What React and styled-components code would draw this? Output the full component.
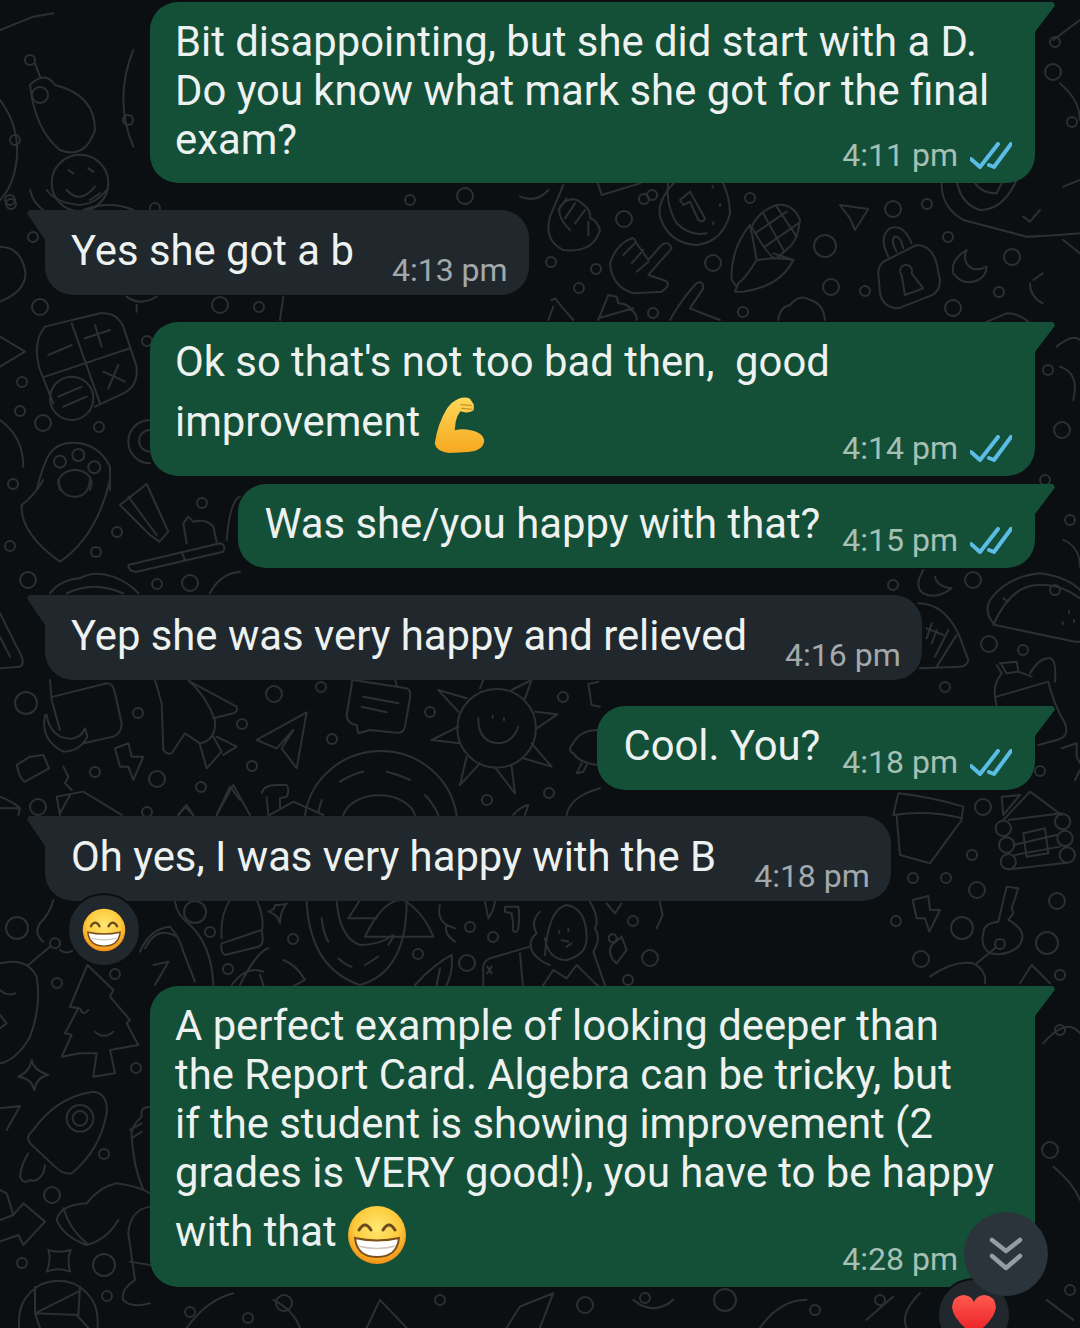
import React from 'react'
import styled, { createGlobalStyle } from 'styled-components'

const GlobalStyle = createGlobalStyle`
  html, body { margin: 0; padding: 0; background: #0b0f12; }
  * { box-sizing: border-box; }
`

// wallpaper rings, [x, y, r] in page pixels
const rings = [
  [11,204,5],[33,237,5],[40,307,8],[220,305,8],[259,307,5],[147,341,5],[22,382,5],[20,411,5],[43,423,8],[99,427,5],
  [13,484,5],[10,546,5],[96,552,5],[117,532,5],[202,503,5],[28,580,8],[157,584,5],[190,583,8],[26,703,11],[138,713,5],
  [95,772,5],[157,779,8],[201,787,5],[38,807,8],[147,812,5],[17,928,11],[57,983,5],[115,974,5],[136,1068,5],[104,1154,5],
  [52,1195,8],[22,1263,5],[104,1265,11],[107,1296,5],[274,694,8],[321,687,5],[242,724,5],[332,739,5],[430,712,5],[563,697,5],
  [252,766,5],[487,800,5],[549,793,5],[644,199,5],[750,198,5],[624,219,8],[551,262,5],[596,269,5],[579,288,5],[713,263,8],
  [825,246,11],[893,209,8],[927,204,5],[948,237,5],[1012,257,8],[999,292,5],[831,287,8],[865,291,5],[953,308,8],[653,313,5],
  [743,312,5],[893,585,5],[973,580,8],[989,644,8],[1023,650,5],[945,687,5],[1040,771,5],[983,807,8],[972,855,5],[913,878,5],
  [946,878,5],[977,890,8],[1057,901,8],[896,921,5],[962,928,11],[1047,943,11],[921,959,8],[1060,975,5],[195,912,11],[210,932,5],
  [293,939,5],[228,969,5],[418,954,5],[470,927,5],[493,937,5],[467,963,8],[633,921,5],[650,958,8],[628,980,5],[1055,42,5],
  [1053,72,8],[1072,122,5],[30,60,5],[128,120,5],[15,140,5],[40,95,8],[10,200,5],[1048,370,5],[1062,430,8],[1045,480,5],
  [1070,520,5],[1055,590,5],[284,1303,8],[248,1318,5],[440,1300,5],[585,1305,8],[645,1298,5],[725,1300,11],[815,1310,5],[880,1300,5],
  [190,1312,5],[1060,1030,5],[1050,1150,8],[1070,1290,5],[155,208,5],[410,200,5],[465,196,8],[652,195,5],
]

// traced doodles, each group is in the 3x coordinates of its own crop
const doodles = [
  { x: 0, y: 190, paths: [
    'M135 410 L300 370 Q350 365 370 410 L410 530 Q415 590 370 610 L285 650 M120 540 Q95 460 135 410 M120 540 L160 640',
    'M215 400 L300 640 M135 560 L390 475 M145 495 L215 465 M255 445 L330 420 M285 405 L305 470 M310 545 L375 575 M355 525 L325 595 M175 620 L245 590 M190 650 L260 620',
    'M150 625 A65 65 0 1 0 280 625 A65 65 0 1 0 150 625',
    'M110 900 Q130 820 150 790 Q180 750 240 760 Q300 770 330 830 L330 900',
    'M162 815 A18 18 0 1 0 198 815 A18 18 0 1 0 162 815 M217 795 A18 18 0 1 0 253 795 A18 18 0 1 0 217 795 M265 832 A18 18 0 1 0 301 832 A18 18 0 1 0 265 832',
    'M175 880 A50 40 0 1 1 275 880 L270 900 M180 900 L175 880',
    'M0 170 Q60 170 75 240 Q85 300 0 335 M0 440 L75 485 L0 530 M0 690 Q70 740 70 830',
    'M450 690 A65 65 0 0 0 450 820 M450 720 A32 32 0 0 0 450 785',
    'M90 0 Q100 40 130 60 M140 0 Q170 40 240 45 Q290 40 320 0 M270 30 L300 10',
    'M380 320 Q420 350 470 320 M410 345 L410 365 M850 320 L840 390',
  ] },
  { x: 0, y: 480, paths: [
    'M130 0 Q100 50 65 75 Q60 160 180 245 Q290 170 330 0 M175 0 Q180 50 225 50 Q265 50 270 0',
    'M360 75 L440 12 L505 155 L478 185 L450 165 Z M385 50 L470 165',
    'M385 255 L660 190 Q680 195 670 215 L410 275 Q385 275 385 255 M545 215 L555 240',
    'M560 190 L550 130 L565 110 L580 125 Q620 115 640 140 L650 185',
    'M150 340 Q180 300 240 295 Q280 270 340 290 Q390 310 415 340 M200 340 Q280 300 370 340',
    'M0 400 L50 500 Q80 550 60 560 L0 565 M0 470 L30 530',
    'M150 600 L155 660 L180 750 M160 650 L320 610 Q340 610 345 640 L365 730 Q365 760 340 770 L250 790',
    'M135 705 Q120 780 190 815 Q240 815 262 770 L255 745 Q235 790 180 770 Q145 750 140 705 Z',
    'M465 600 L485 670 L490 810 Q500 825 515 820 L555 760 L600 790 Q650 780 645 720 Q620 650 565 600',
    'M570 605 L710 680 Q715 695 700 700 L640 715 M600 795 L620 865 L665 815 L640 770 M650 770 L710 800 L670 825',
    'M50 855 L90 830 L130 825 L147 865 L75 905 Q60 900 50 855',
    'M345 805 L385 790 L395 830 L430 830 L400 900 L385 860 L360 860 Z M190 860 L205 890 L195 910 L215 930',
    'M170 950 L250 935 L365 1005 M170 950 L180 1005 M210 945 L180 1000 M535 1005 L555 980 L580 1005 M650 1005 L690 920 L720 960',
    'M0 950 Q40 965 60 985 L55 1005 M0 985 L55 985',
    'M680 180 Q690 60 720 50 M630 340 Q660 280 720 275',
  ] },
  { x: 0, y: 900, paths: [
    'M262 195 L210 320 L235 325 L195 400 L215 405 L185 470 L240 460 L290 460 L280 530 L345 520 L330 450 L415 435 L380 370 L390 360 L330 290 L340 270 Z',
    'M240 325 Q250 350 265 330 M285 395 Q310 420 340 395',
    'M0 190 Q80 170 110 230 Q125 320 90 410 Q50 480 0 490 M0 270 Q20 290 45 280 M0 345 L20 370 L0 385',
    'M85 195 L150 140 M150 130 A15 15 0 1 0 180 130 A15 15 0 1 0 150 130 M160 0 Q150 40 120 70 Q100 100 130 125 M180 150 Q200 165 220 150',
    'M95 480 Q100 510 145 525 Q110 530 103 570 Q95 535 55 530 Q90 515 95 480Z M0 625 L60 618 L20 690',
    'M100 690 Q170 590 280 575 Q325 580 320 640 Q300 750 215 820 Q190 825 165 800 L90 730 Q75 710 100 690Z',
    'M200 655 A40 40 0 1 0 280 655 A40 40 0 1 0 200 655 M218 655 A22 22 0 1 0 262 655 A22 22 0 1 0 218 655',
    'M85 760 Q65 790 60 830 Q70 855 90 840 Q110 850 130 820 L135 795',
    'M0 960 L40 945 L70 910 L135 965 L70 1035 L55 1005 L0 1025 M0 870 L20 880 L40 945',
    'M170 960 Q180 915 260 910 Q300 860 350 850 Q420 860 450 880 M170 960 Q190 1010 260 1035 Q320 1020 355 960 M190 925 Q210 990 260 1030',
    'M145 1050 Q175 1060 212 1050 Q200 1080 210 1115 Q175 1100 140 1115 Q155 1080 145 1050Z',
    'M57 1260 A118 118 0 0 1 293 1260 L293 1284 M57 1260 L57 1284',
    'M105 1240 L235 1175 M105 1240 L120 1284 M235 1245 L105 1240 M230 1245 L265 1284 M105 1240 L105 1160 M235 1245 L240 1160',
    'M450 620 Q420 620 425 650 Q390 680 395 710 Q400 800 430 870 M390 690 L425 670 M395 715 L425 695',
    'M450 920 Q390 930 385 1000 L405 1140 Q360 1170 370 1200 Q390 1225 450 1210 M390 1085 L450 1095',
  ] },
  { x: 150, y: 680, paths: [
    'M320 180 L470 97 L440 265 L395 205 L430 150 L380 205 Z',
    'M610 0 L770 25 Q785 30 780 55 L765 140 Q760 160 740 158 L660 150 L625 160 L620 135 Q590 130 590 105 L605 15 Q605 0 610 0Z',
    'M640 50 L745 70 M635 80 L710 97 M735 0 L740 15',
    'M922 145 A118 118 0 1 0 1158 145 A118 118 0 1 0 922 145',
    'M985 115 Q985 190 1050 190 Q1090 185 1105 140 M1028 107 L1028 113 M1062 115 L1062 121',
    'M925 95 L865 30 L950 55 M990 25 L1000 0 M1085 30 L1145 0 L1125 55 M1155 95 L1222 103 L1160 145 M1145 190 L1205 260 L1120 235 M1085 260 L1095 340 L1035 262 M990 250 L930 315 L950 230 M925 140 L845 180 L930 190',
    'M1345 150 Q1290 150 1270 190 Q1250 210 1270 220 Q1290 250 1345 255 M1295 250 L1280 280 L1300 275 L1310 255',
    'M465 405 A230 225 0 0 1 920 405 M570 305 Q610 280 640 275 M710 275 Q750 285 780 300 M580 405 A110 75 0 0 1 795 405',
    'M515 360 L505 395 M825 345 Q850 370 865 405',
    'M335 340 Q340 315 380 315 L410 315 Q420 330 410 350 L390 355 L390 380 M350 352 L355 405 M360 405 L430 365 L520 405',
    'M200 405 L250 315 L300 405 M85 405 L110 375 L130 405 M1345 5 L1315 12 L1325 75 L1350 80 M1250 405 Q1260 350 1350 325 M1090 405 Q1110 380 1135 375 L1125 405',
  ] },
  { x: 520, y: 180, paths: [
    'M130 15 L90 110 Q70 180 130 210 Q220 220 240 150 Q230 120 210 115 Q215 85 170 60 Q145 50 120 80 Q110 110 150 150 M140 55 L115 90 M165 70 L135 115 M195 90 L165 130 M205 125 L205 165',
    'M0 50 Q50 70 85 30 M230 0 L245 45 L360 10',
    'M470 0 Q410 60 420 110 Q445 190 530 195 Q610 185 630 100 Q630 50 605 0 M445 0 Q435 70 470 130 Q510 170 560 160',
    'M480 60 L510 35 L555 115 Q550 130 535 120 L510 65 L490 75 Z',
    'M600 72 L600 78 M580 127 L580 133 M578 17 L578 23',
    'M695 140 Q720 90 770 75 Q820 70 840 120 Q835 170 815 195 L770 235 Q750 240 695 140',
    'M730 100 L790 210 M770 80 L830 170 M705 160 L800 95 M735 200 L835 130',
    'M690 135 Q630 210 635 300 L650 320 M690 135 Q700 180 710 240 Q680 290 655 310 L645 335 L670 335 Q780 320 820 240 Q770 230 715 240 M820 240 L760 220',
    'M335 175 Q290 190 270 250 Q275 320 340 340 L425 335 Q460 310 430 300 L385 285 L455 205 Q445 180 425 195 L385 240 L350 190 Q340 170 335 175 M310 225 L345 190 M335 250 L370 210 M350 275 L385 245',
    'M960 75 L1045 87 L1005 150 L990 115 Z',
    'M1100 240 L1190 195 Q1235 195 1250 250 L1260 300 Q1260 340 1225 350 L1135 385 Q1090 385 1080 340 L1075 280 Q1075 250 1100 240Z',
    'M1105 230 Q1075 170 1110 145 Q1150 130 1175 190 M1130 215 Q1110 180 1125 170 Q1140 165 1150 205',
    'M1145 285 A18 18 0 1 1 1175 280 L1210 325 L1155 345 Z',
    'M1340 210 Q1290 240 1300 280 Q1330 320 1375 300 Q1400 285 1400 260 Q1360 280 1340 250 Q1330 230 1340 210Z',
    'M1265 0 Q1260 80 1330 120 L1520 170 Q1560 170 1680 160 M1310 0 Q1320 70 1380 90 Q1450 90 1490 0 M1360 0 Q1380 40 1430 40 L1450 0 M1510 110 L1530 125 L1560 90',
    'M450 420 Q490 350 530 310 Q550 300 550 325 L510 385 L560 405 L600 420',
    'M95 360 L105 355 L125 380 L160 420 M100 380 L85 420 M235 420 L265 345 L290 350 L295 370 Q330 370 350 410 L350 420 M235 415 L340 385',
    'M775 420 Q780 380 810 375 Q840 340 870 360 Q910 370 915 420 M1390 430 L1460 400 Q1500 400 1530 430 M1530 310 Q1530 350 1568 370 M1568 280 L1540 300',
  ] },
  { x: 880, y: 570, paths: [
    'M130 0 Q100 50 130 70 Q170 90 215 55 Q170 50 165 20',
    'M115 100 Q190 100 235 190 L265 270 Q260 290 240 290 L120 295 M140 175 L190 195 M155 160 L140 205 M170 180 L155 220 M230 195 L170 290 M205 180 L165 260',
    'M345 165 Q310 130 330 90 Q380 20 480 10 Q560 20 600 60 M345 165 L585 215 L600 215 M340 165 Q390 50 470 45 Q540 40 600 85 M370 85 Q385 100 390 85',
    'M567 122 L567 128 M548 157 L548 163 M582 150 L582 156',
    'M360 280 L410 275 L415 305 L455 320 M350 285 L365 310 Q340 340 345 380 L350 410 M350 380 L505 335 M365 285 L380 310 L415 305',
    'M450 310 Q480 260 510 265 Q530 270 525 335 M505 335 Q520 400 555 460 Q570 500 530 510 L475 525',
    'M545 535 L590 520 L590 560 L600 580 M600 600 L585 630',
    'M55 670 Q150 680 250 710 L245 745 Q150 720 40 735 Z M50 740 L60 855 L150 880 L245 750',
    'M347 775 A23 23 0 1 0 393 775 A23 23 0 1 0 347 775 M357 825 A23 23 0 1 0 403 825 A23 23 0 1 0 357 825 M362 875 A23 23 0 1 0 408 875 A23 23 0 1 0 362 875',
    'M525 755 A23 23 0 1 0 571 755 A23 23 0 1 0 525 755 M532 805 A23 23 0 1 0 578 805 A23 23 0 1 0 532 805 M539 855 A23 23 0 1 0 585 855 A23 23 0 1 0 539 855',
    'M370 750 L450 665 L545 735 M385 750 L545 730 M400 825 L530 795 M405 855 L540 830 M385 898 L560 878',
    'M430 790 L495 775 L505 850 L440 860 Z M365 680 L420 675 L370 735Z',
    'M98 990 L145 978 L150 1020 L180 1020 L148 1085 L135 1045 L110 1045 Z',
    'M310 1090 Q310 1060 355 1055 L380 950 L415 955 L395 1015 L400 1030 L385 1050 Q450 1085 415 1130 Q380 1160 330 1150 Q300 1130 310 1090Z',
    'M345 1122 A15 15 0 1 0 375 1122 A15 15 0 1 0 345 1122 M345 1135 L290 1180',
    'M150 1220 Q220 1170 280 1180 Q320 1200 315 1240 M420 1240 L455 1185 L510 1240',
  ] },
  { x: 140, y: 895, paths: [
    'M270 15 Q240 60 245 130 M350 15 Q375 70 365 110 M245 145 L365 105 Q375 150 355 155 L255 180 Q240 170 245 145',
    'M105 20 Q110 60 150 90 Q215 150 220 270',
    'M0 170 Q30 100 90 95 Q120 130 130 170 L165 260 M15 160 Q50 90 110 125 M40 210 L85 200 L45 270',
    'M405 30 Q430 30 440 25 Q420 50 420 85 Q415 60 385 50 Q405 45 405 30Z',
    'M500 20 Q510 220 660 270 Q800 230 800 20',
    'M675 125 Q730 10 790 15 Q850 50 880 125 Z M625 70 L710 70 M625 70 L660 15',
    'M545 70 Q550 115 565 140 M590 20 Q600 130 660 150 Q720 150 760 120 M595 190 Q615 210 635 215 M675 210 L715 185 M745 150 L760 125',
    'M900 30 Q890 70 920 90 Q910 115 945 140 M920 90 L945 100 M1035 20 L1045 70 Q1060 50 1065 20',
    'M1095 35 L1135 35 Q1140 60 1135 100 L1130 110 Q1115 115 1120 90 L1115 55 L1095 50Z',
    'M1215 180 Q1225 40 1280 30 Q1340 40 1340 130 Q1340 180 1280 195 Q1225 195 1215 130',
    'M1200 50 Q1170 80 1190 115 Q1160 140 1180 175 Q1200 200 1230 210 M1350 20 Q1380 70 1365 100 Q1385 130 1360 170 L1400 285',
    'M1258 107 L1258 113 M1285 102 L1285 108 M1265 135 L1285 140 M1280 155 L1295 145',
    'M1200 285 L1240 225 L1280 250 L1310 210 L1360 260 L1390 285',
    'M1170 155 L1050 190 Q1025 200 1030 230 L1030 285 M1140 175 L1150 285 M1042 215 L1055 235 M1055 215 L1042 235',
    'M1415 150 L1445 125 L1460 165 L1430 205 Q1400 180 1415 150Z M1406 130 A12 12 0 1 0 1430 130 A12 12 0 1 0 1406 130',
    'M1520 10 L1555 0 L1568 60 L1550 100 M1400 25 L1425 55 L1445 25',
    'M825 270 Q880 210 935 180 Q940 230 920 270 M900 220 L890 270 M275 270 Q320 210 370 230 M360 240 L375 285 M430 195 Q470 210 495 255 L440 285 M300 270 Q350 170 385 160',
  ] },
  // top left and the edges, by eye from the full picture
  { x: 0, y: 0, paths: [
    'M90 255 Q135 210 165 255 Q285 285 285 390 Q255 480 180 450 Q105 390 90 255Z M120 230 L105 190',
    'M155 549 A85 85 0 1 0 325 549 A85 85 0 1 0 155 549 M200 570 Q240 615 285 560 M205 510 L220 520 M265 505 L280 515',
    'M0 300 Q60 380 50 480 Q40 560 0 600 M0 90 L100 50 L160 40 M400 150 Q340 300 400 440 M250 630 Q330 600 400 630',
    'M3160 120 L3240 60 M3180 250 Q3240 300 3240 360 M3170 1040 Q3220 1000 3240 1020',
    'M3180 1100 Q3240 1120 3220 1200 M3190 560 L3240 540 M3190 720 L3240 760 M3190 1620 Q3240 1640 3240 1700',
    'M3130 3130 Q3200 3050 3240 3100 M3160 3500 Q3220 3550 3240 3600 M3140 3900 L3220 3960',
    'M1520 3984 L1560 3920 L1660 3880 L1620 3984 M1900 3900 Q1960 3950 2020 3900 M2280 3984 Q2340 3900 2420 3900 M2600 3960 L2680 3890 M2760 3880 Q2700 3940 2720 3984',
    'M560 3984 Q620 3900 700 3880 M820 3900 Q880 3930 900 3984 M1100 3984 L1140 3900 L1220 3984',
  ] },
]

const Doodles = () => (
  <Wallpaper viewBox="0 0 1080 1328" aria-hidden="true">
    {rings.map(([cx, cy, r], i) => <circle key={i} cx={cx} cy={cy} r={r} />)}
    {doodles.map((group, i) => (
      <g key={i} transform={`translate(${group.x} ${group.y}) scale(0.3333)`} strokeWidth="6">
        {group.paths.map((d, j) => <path key={j} d={d} />)}
      </g>
    ))}
  </Wallpaper>
)

const Ticks = () => (
  <TickIcon viewBox="0 0 42 27" aria-hidden="true">
    <path d="M1 17 L10 25 L28 2" />
    <path d="M19 23 L24 25 L41 2" />
  </TickIcon>
)

const Grin = ({ id, size }) => (
  <EmojiIcon $size={size} viewBox="0 0 60 60" aria-hidden="true">
    <defs>
      <radialGradient id={id} cx="50%" cy="38%" r="62%">
        <stop offset="0%" stopColor="#ffe873" />
        <stop offset="62%" stopColor="#fdcb3c" />
        <stop offset="100%" stopColor="#f08f16" />
      </radialGradient>
    </defs>
    <circle cx="30" cy="30" r="29" fill={`url(#${id})`} />
    <path d="M12 25 Q18 15 24 25 M36 25 Q42 15 48 25" fill="none" stroke="#6d4a1e" strokeWidth="3" strokeLinecap="round" />
    <path d="M8 33 Q30 38 52 33 Q50 52 30 52 Q10 52 8 33Z" fill="#fff" stroke="#7a4f1c" strokeWidth="2" />
    <path d="M11 41 Q30 46 49 41" fill="none" stroke="#cfc8bd" strokeWidth="1.5" />
  </EmojiIcon>
)

const Muscle = () => (
  <EmojiIcon $size={57} viewBox="14 11 54 60" aria-hidden="true">
    <defs>
      <linearGradient id="muscleFill" x1="0" y1="0" x2="0" y2="1">
        <stop offset="0%" stopColor="#ffd858" />
        <stop offset="100%" stopColor="#f5a81f" />
      </linearGradient>
    </defs>
    <path d="M15 61 Q18 40 28 24 Q33 17 40 14 Q47 11 52 14 L56 20 L56 26 Q52 29 46 28 L42 27 Q38 32 37 38 L36 47 Q44 45 53 47 Q67 50 67 59 Q65 69 50 70 L30 71 Q16 69 15 61Z" fill="url(#muscleFill)" />
    <path d="M42 20 L54 21 M43 24 L55 25" fill="none" stroke="#c07f1e" strokeWidth="1" />
  </EmojiIcon>
)

const Heart = () => (
  <EmojiIcon $size={46} viewBox="0 0 46 42" aria-hidden="true">
    <defs>
      <linearGradient id="heartFill" x1="0" y1="0" x2="0" y2="1">
        <stop offset="0%" stopColor="#ff5a4f" />
        <stop offset="100%" stopColor="#e81c24" />
      </linearGradient>
    </defs>
    <path d="M23 41 Q2 26 1 13 Q2 2 12 1 Q20 1 23 8 Q26 1 34 1 Q44 2 45 13 Q44 26 23 41Z" fill="url(#heartFill)" />
  </EmojiIcon>
)

const Meta = ({ time, ticks, mine }) => (
  <MetaRow $mine={mine}>
    <span>{time}</span>
    {ticks && <Ticks />}
  </MetaRow>
)

export default function App() {
  return (
    <Screen>
      <GlobalStyle />
      <Doodles />
      <MessageList>
        <Bubble $mine $wide $top={2} $padTop={15}>
          <Body $gap={10}>
            <Line>Bit disappointing, but she did start with a D.</Line>
            <Line>Do you know what mark she got for the final</Line>
            <Line>exam?</Line>
          </Body>
          <Meta time="4:11 pm" ticks mine />
        </Bubble>

        <Bubble $top={27}>
          <Body><Line>Yes she got a b</Line></Body>
          <Meta time="4:13 pm" />
        </Bubble>

        <Bubble $mine $wide $top={27} $padTop={10}>
          <Body $gap={15}>
            <Line $height={60}>Ok so that's not too bad then,  good</Line>
            <Line $height={60}>improvement <Muscle /></Line>
          </Body>
          <Meta time="4:14 pm" ticks mine />
        </Bubble>

        <Bubble $mine $top={8}>
          <Body><Line>Was she/you happy with that?</Line></Body>
          <Meta time="4:15 pm" ticks mine />
        </Bubble>

        <Bubble $top={27}>
          <Body><Line>Yep she was very happy and relieved</Line></Body>
          <Meta time="4:16 pm" />
        </Bubble>

        <Bubble $mine $top={26}>
          <Body><Line>Cool. You?</Line></Body>
          <Meta time="4:18 pm" ticks mine />
        </Bubble>

        <Bubble $top={26}>
          <Body><Line>Oh yes, I was very happy with the B</Line></Body>
          <Meta time="4:18 pm" />
          <Reaction $left={22} $lift={8}><Grin id="grinSmall" size={44} /></Reaction>
        </Bubble>

        <Bubble $mine $wide $top={85} $padTop={15}>
          <Body $gap={11}>
            <Line>A perfect example of looking deeper than</Line>
            <Line>the Report Card. Algebra can be tricky, but</Line>
            <Line>if the student is showing improvement (2</Line>
            <Line>grades is VERY good!), you have to be happy</Line>
            <Line $height={70}>with that <Grin id="grinLarge" size={60} /></Line>
          </Body>
          <Meta time="4:28 pm" ticks mine />
          <Reaction $left={787} $lift={9}><Heart /></Reaction>
        </Bubble>
      </MessageList>
      <ScrollButton aria-label="Scroll to bottom">
        <svg width="34" height="36" viewBox="0 0 34 36" fill="none" stroke="#939da5" strokeWidth="4.5" strokeLinecap="round" strokeLinejoin="round">
          <path d="M3 4 L17 15 L31 4" />
          <path d="M3 20 L17 32 L31 20" />
        </svg>
      </ScrollButton>
    </Screen>
  )
}

const Screen = styled.div`
  position: relative;
  width: 1080px;
  height: 1328px;
  overflow: hidden;
  background: #0b0f12;
  font-family: Roboto, "Liberation Sans", sans-serif;
`

const Wallpaper = styled.svg`
  position: absolute;
  inset: 0;
  width: 1080px;
  height: 1328px;
  fill: none;
  stroke: #2c3033;
  stroke-width: 2;
  stroke-linecap: round;
  stroke-linejoin: round;
`

const MessageList = styled.div`
  position: relative;
  display: flex;
  flex-direction: column;
  align-items: flex-start;
  padding: 0 45px;
`

const Bubble = styled.div`
  position: relative;
  margin-top: ${props => props.$top}px;
  align-self: ${props => props.$mine ? 'flex-end' : 'flex-start'};
  background: ${props => props.$mine ? '#144f38' : '#20282d'};
  color: #edf2f0;
  border-radius: ${props => props.$mine ? '28px 0 28px 28px' : '0 28px 28px 28px'};
  ${props => props.$wide ? `
    display: grid;
    width: 885px;
    padding: ${props.$padTop}px 23px 9px 25px;
  ` : `
    display: flex;
    gap: ${props.$mine ? 22 : 38}px;
    height: ${props.$mine ? 84 : 85}px;
    padding: ${props.$mine ? '4px 23px 9px 26px' : '2px 21px 6px 26px'};
  `}

  &::before {
    content: '';
    position: absolute;
    top: 0;
    ${props => props.$mine ? 'right: -20px;' : 'left: -18px;'}
    width: ${props => props.$mine ? 20 : 18}px;
    height: 30px;
    background: inherit;
    clip-path: ${props => props.$mine
      ? 'polygon(0 0, 90% 0, 100% 12%, 0 100%)'
      : 'polygon(10% 0, 100% 0, 100% 100%, 0 12%)'};
  }
`

const Body = styled.div`
  grid-area: 1 / 1;
  align-self: center;
  padding-bottom: ${props => props.$gap || 0}px;
`

const Line = styled.div`
  font-size: 41.8px;
  line-height: ${props => props.$height || 49}px;
  white-space: pre;
`

const MetaRow = styled.div`
  grid-area: 1 / 1;
  align-self: end;
  justify-self: end;
  display: flex;
  align-items: center;
  gap: 12px;
  height: 38px;
  font-size: 32px;
  color: ${props => props.$mine ? '#a5c0b4' : '#a3a8ab'};
`

const TickIcon = styled.svg`
  width: 42px;
  height: 27px;
  fill: none;
  stroke: #5bbde6;
  stroke-width: 4;
  stroke-linecap: round;
  stroke-linejoin: round;
`

const EmojiIcon = styled.svg`
  display: inline-block;
  width: ${props => props.$size}px;
  height: ${props => props.$size}px;
  margin: -20px 0;
  vertical-align: middle;
`

const Reaction = styled.div`
  position: absolute;
  top: calc(100% - ${props => props.$lift}px);
  left: ${props => props.$left}px;
  display: flex;
  align-items: center;
  justify-content: center;
  width: 74px;
  height: 74px;
  border-radius: 50%;
  background: #20282d;
  border: 2px solid #0b0f12;
`

const ScrollButton = styled.button`
  position: absolute;
  left: 964px;
  top: 1212px;
  display: flex;
  align-items: center;
  justify-content: center;
  width: 84px;
  height: 84px;
  padding: 0;
  border: 0;
  border-radius: 50%;
  background: #2c343b;
`
